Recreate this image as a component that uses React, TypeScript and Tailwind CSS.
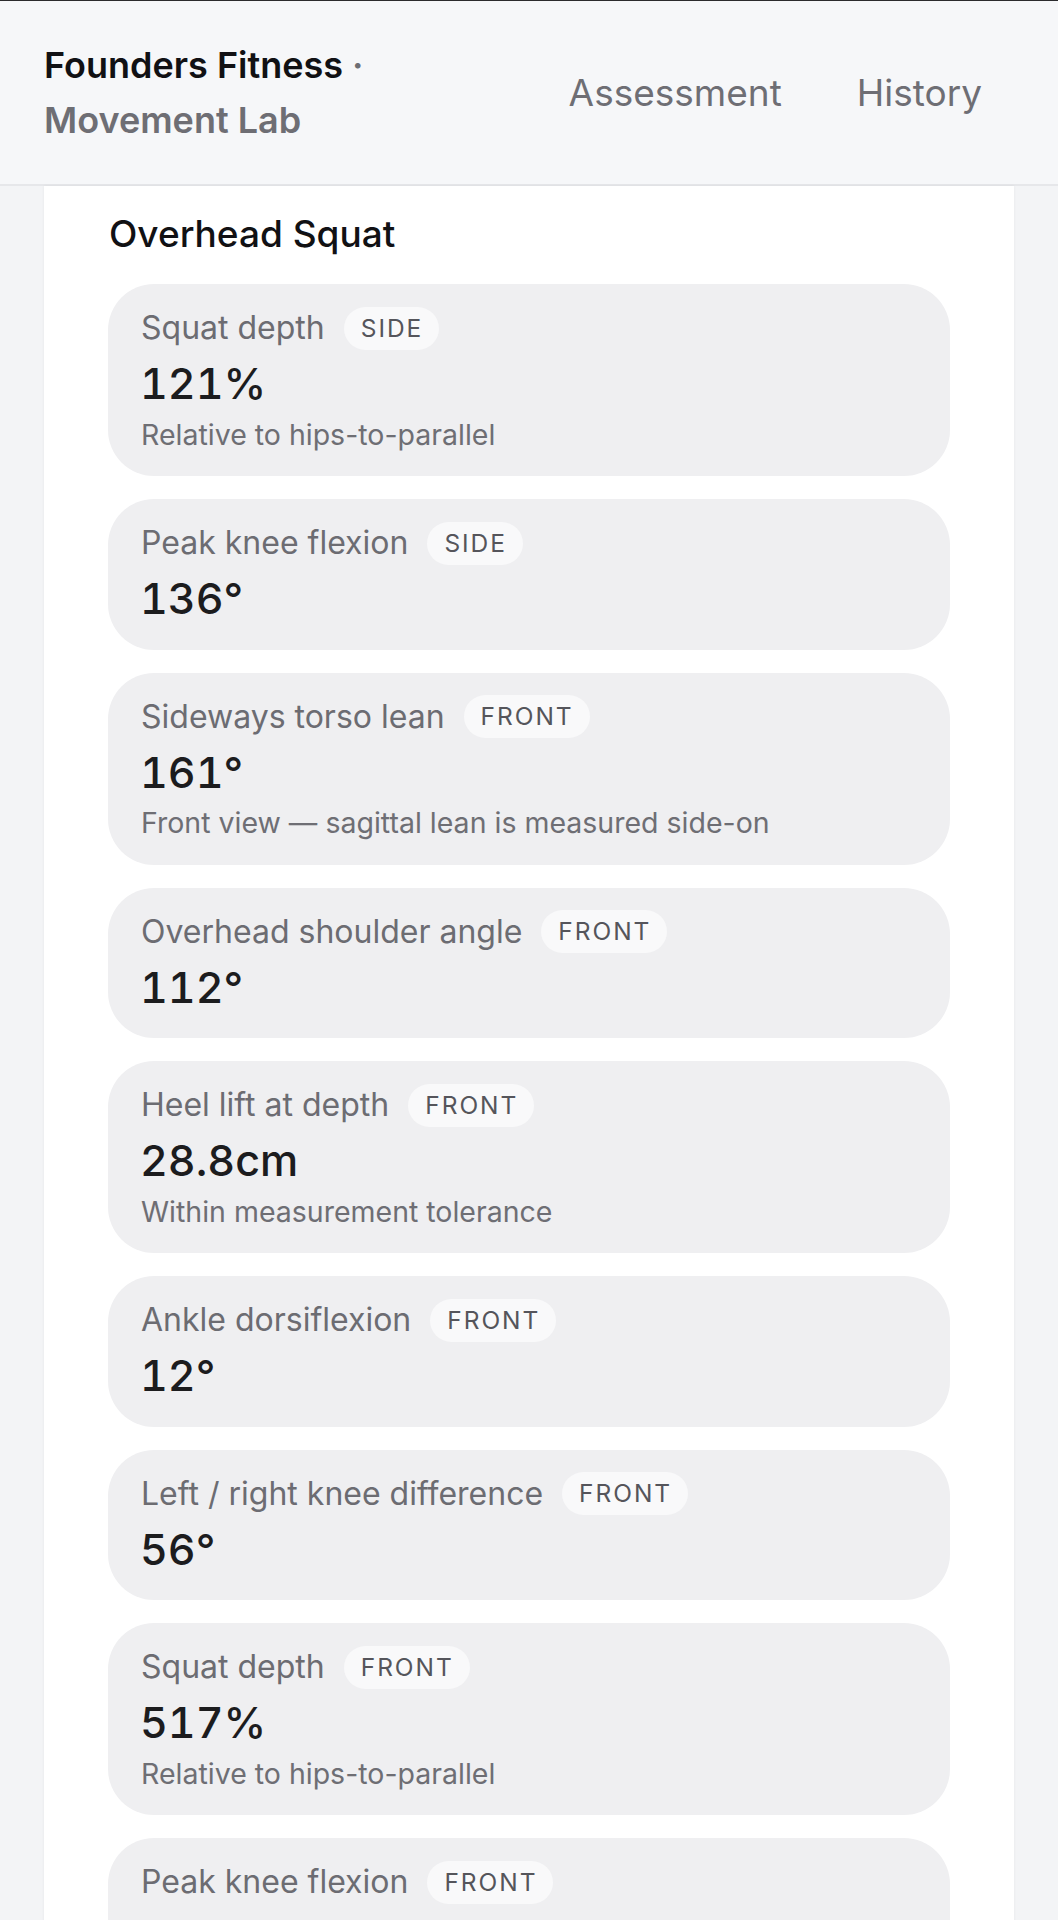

type Metric = {
  label: string;
  view: "SIDE" | "FRONT";
  value: string;
  note?: string;
};

const metrics: Metric[] = [
  { label: "Squat depth", view: "SIDE", value: "121%", note: "Relative to hips-to-parallel" },
  { label: "Peak knee flexion", view: "SIDE", value: "136°" },
  { label: "Sideways torso lean", view: "FRONT", value: "161°", note: "Front view — sagittal lean is measured side-on" },
  { label: "Overhead shoulder angle", view: "FRONT", value: "112°" },
  { label: "Heel lift at depth", view: "FRONT", value: "28.8cm", note: "Within measurement tolerance" },
  { label: "Ankle dorsiflexion", view: "FRONT", value: "12°" },
  { label: "Left / right knee difference", view: "FRONT", value: "56°" },
  { label: "Squat depth", view: "FRONT", value: "517%", note: "Relative to hips-to-parallel" },
  { label: "Peak knee flexion", view: "FRONT", value: "141°" },
];

function MetricCard({ metric }: { metric: Metric }) {
  return (
    <div className="rounded-[46px] bg-[#efeff1] px-[33px] pt-[22px] pb-[25.5px]">
      <div className="flex h-[44px] items-center gap-[19px]">
        <span className="text-[32px] leading-none text-[#6c6c72]">{metric.label}</span>
        <span className="flex h-[43px] items-center rounded-full bg-[#f9f9fa] pl-[17px] pr-[16px] text-[24.5px] leading-none tracking-[0.08em] text-[#55555b]">
          {metric.view}
        </span>
      </div>
      <div className="mt-[7px] -ml-px text-[43px] leading-[52px] font-medium tabular-nums text-[#1c1c1e]">{metric.value}</div>
      {metric.note ? (
        <div className="mt-[9.5px] text-[28.5px] leading-[32px] text-[#6e6e74]">{metric.note}</div>
      ) : null}
    </div>
  );
}

export default function App() {
  return (
    <div className="h-[1920px] overflow-hidden border-t border-[#2b2b2d] bg-[#f3f4f6] font-['Inter','Liberation_Sans',sans-serif]">
      <header className="flex h-[185px] items-center justify-between border-b-2 border-[#e6e7ea] bg-[#f6f7f9] pl-[44px] pr-[76px]">
        <div className="text-[36px] leading-[55px] font-semibold">
          <div className="text-[#111114]">
            Founders Fitness <span className="text-[#6e6e74]">·</span>
          </div>
          <div className="text-[#6e6e74]">Movement Lab</div>
        </div>
        <nav className="flex items-center gap-[75px] text-[37px] text-[#6e6e74]">
          <span>Assessment</span>
          <span>History</span>
        </nav>
      </header>
      <main className="mx-[44px] bg-white px-[64px] pt-[24px] pb-[40px] shadow-[0_0_3px_rgba(0,0,0,0.06)]">
        <h2 className="pl-px text-[37px] leading-[48px] font-medium text-[#111114]">Overhead Squat</h2>
        <div className="mt-[26px] flex flex-col gap-[23px]">
          {metrics.map((metric, index) => (
            <MetricCard key={`${metric.label}-${metric.view}-${index}`} metric={metric} />
          ))}
        </div>
      </main>
    </div>
  );
}
